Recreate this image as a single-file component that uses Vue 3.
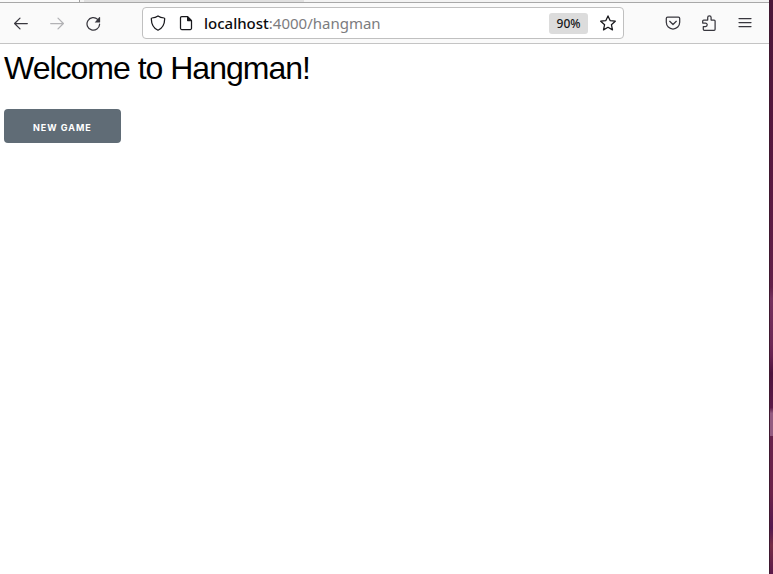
<script setup>
import { ref } from 'vue'

const host = 'localhost'
const path = ':4000/hangman'
const games = ref(0)

function newGame() {
  games.value += 1
}
</script>

<template>
  <div class="desktop">
    <div class="window">
      <div class="tabs">
        <span class="tab-gap"></span>
        <span class="tab"></span>
      </div>
      <header class="toolbar">
        <nav class="group" aria-label="History">
          <button class="icon" type="button" aria-label="Back">
            <svg viewBox="0 0 16 16"><path d="M14.3 8.500H1.800M7 3.100 1.600 8.500 7 13.900" /></svg>
          </button>
          <button class="icon" type="button" aria-label="Forward" disabled>
            <svg viewBox="0 0 16 16"><path d="M1.700 8.500h12.500M9 3.100 14.400 8.500 9 13.900" /></svg>
          </button>
          <button class="icon" type="button" aria-label="Reload">
            <svg viewBox="0 0 16 16">
              <path d="M14.600 9.200A6.300 6.300 0 1 1 12.700 4.400" />
              <path class="solid" d="M15.100 2.200v4.900a.5.5 0 0 1-.5.5H9.700L14.400 1.900z" />
            </svg>
          </button>
        </nav>
        <div class="address">
          <button class="small" type="button" aria-label="Tracking protection">
            <svg viewBox="0 0 16 16"><path d="M8 .9C6.3 2.1 4 2.8 1.9 3c-.4 0-.6.3-.6.7C1.400 9 3.700 13.300 8 15.200c4.300-1.900 6.600-6.200 6.700-11.500 0-.4-.2-.7-.6-.7C12 2.800 9.700 2.100 8 .9z" /></svg>
          </button>
          <button class="small" type="button" aria-label="Site information">
            <svg viewBox="0 0 16 16">
              <path d="M3.700 1.700h5.800l4 4v7.600a1.200 1.200 0 0 1-1.200 1.200H3.700a1.200 1.200 0 0 1-1.200-1.200V2.900a1.200 1.200 0 0 1 1.200-1.200z" />
              <path class="solid" d="M9 1.200h.9L14 5.400v.9H9.700A.7.7 0 0 1 9 5.600z" />
            </svg>
          </button>
          <a class="url" href="#hangman"><b>{{ host }}</b>{{ path }}</a>
          <button class="zoom" type="button">90%</button>
          <button class="small" type="button" aria-label="Bookmark">
            <svg viewBox="0 0 16 16"><path d="m8 .9 2.100 4.700 5.200.6-3.900 3.500 1.100 5.200L8 12.300l-4.500 2.600 1.100-5.200L.7 6.200l5.200-.6z" /></svg>
          </button>
        </div>
        <div class="group">
          <button class="icon" type="button" aria-label="Pocket">
            <svg viewBox="0 0 16 16">
              <path d="M2.600 2.200h10.800c.8 0 1.300.5 1.300 1.300V7.300a6.700 6.700 0 0 1-13.400 0V3.500c0-.8.5-1.300 1.300-1.300z" />
              <path d="M4.700 6.300 8 9.500l3.300-3.200" />
            </svg>
          </button>
          <button class="icon" type="button" aria-label="Extensions">
            <svg viewBox="0 0 16 16"><path d="M3.300 15.300c-.6 0-1-.4-1-1v-2.800h2.200a1.700 1.700 0 0 0 0-3.400H1.700V6c0-.6.4-1 1-1h4V2.600a1.700 1.700 0 0 1 3.400 0V5h3c.6 0 1 .4 1 1v8.300c0 .6-.4 1-1 1z" /></svg>
          </button>
          <button class="icon" type="button" aria-label="Menu">
            <svg viewBox="0 0 16 16"><path d="M2 3.500h12M2 7.500h12M2 11.500h12" /></svg>
          </button>
        </div>
      </header>
      <main class="page">
        <h1>Welcome to Hangman!</h1>
        <button class="new-game" type="button" @click="newGame">New Game</button>
      </main>
    </div>
    <div class="wallpaper"></div>
  </div>
</template>

<style>
body {
  margin: 0;
}
</style>

<style scoped>
.desktop {
  display: flex;
  min-height: 100vh;
  font-family: "Noto Sans", sans-serif;
}
.window {
  flex: 1;
  min-width: 0;
  background: #fff;
}
.wallpaper {
  width: 3px;
  border-left: 1px solid #3f1830;
  background: linear-gradient(#4a1638 0%, #581840 30%, #621f48 50%, #74305d 52%, #6c2855 60%, #672250 62%, #4c123d 65%, #5b1a48 71%, #935a80 72%, #935a80 76%, #67224c 76%, #6b2249 86%, #541850 92%, #762b45 95%, #5b1a4a 100%);
}
.tabs {
  display: flex;
  height: 2px;
  background: #f3f3f3;
  border-bottom: 1px solid #a8a8a8;
}
.tab-gap {
  width: 79px;
  background: #fafafa;
  border-right: 1px solid #a0a0a0;
}
.tab {
  width: 220px;
  margin-left: 4px;
  background: #e0e0e0;
}
.toolbar {
  display: flex;
  align-items: center;
  justify-content: space-between;
  height: 40px;
  padding: 0 8px 0 5px;
  background: #fafafa;
  border-bottom: 1px solid #c4c4c4;
}
.group {
  display: flex;
  gap: 4px;
}
button {
  font-family: inherit;
  border: 0;
  padding: 0;
  background: none;
  color: #38373e;
}
.icon {
  display: grid;
  place-items: center;
  width: 32px;
  height: 32px;
}
.icon:disabled {
  color: #b2b2b5;
}
svg {
  display: block;
  width: 16px;
  height: 16px;
  fill: none;
  stroke: currentColor;
  stroke-width: 1.25;
  stroke-linecap: round;
  stroke-linejoin: round;
}
.solid {
  fill: currentColor;
  stroke: none;
}
.address {
  display: flex;
  align-items: center;
  flex: 0 1 480px;
  height: 30px;
  background: #fff;
  border: 1px solid #c0c0c0;
  border-radius: 4px;
}
.small {
  display: grid;
  place-items: center;
  width: 28px;
  height: 28px;
  color: #18181c;
}
.small:first-child {
  margin-left: 1px;
}
.small:last-child {
  margin: 0 1px 0 6px;
}
.url {
  flex: 1;
  margin-left: 4px;
  color: #7c7c7e;
  font-size: 15px;
  line-height: 20px;
  text-decoration: none;
}
.url b {
  color: #0c0c0d;
  font-weight: 500;
}
.zoom {
  width: 39px;
  height: 21px;
  padding-top: 1px;
  border-radius: 3px;
  background: #dcdcdc;
  color: #151518;
  font-size: 12px;
  font-weight: 500;
  line-height: 20px;
}
.page {
  padding: 4px;
}
h1 {
  margin: 0 0 20px;
  color: #000;
  font-family: "Liberation Sans", Helvetica, Arial, sans-serif;
  font-size: 32px;
  font-weight: 400;
  line-height: 41px;
  letter-spacing: -1px;
}
.new-game {
  height: 34px;
  padding: 3px 29px 0;
  border-radius: 4px;
  background: #606c76;
  color: #fff;
  font-family: Inter, sans-serif;
  font-size: 9px;
  font-weight: 700;
  letter-spacing: 1px;
  text-transform: uppercase;
}
</style>
